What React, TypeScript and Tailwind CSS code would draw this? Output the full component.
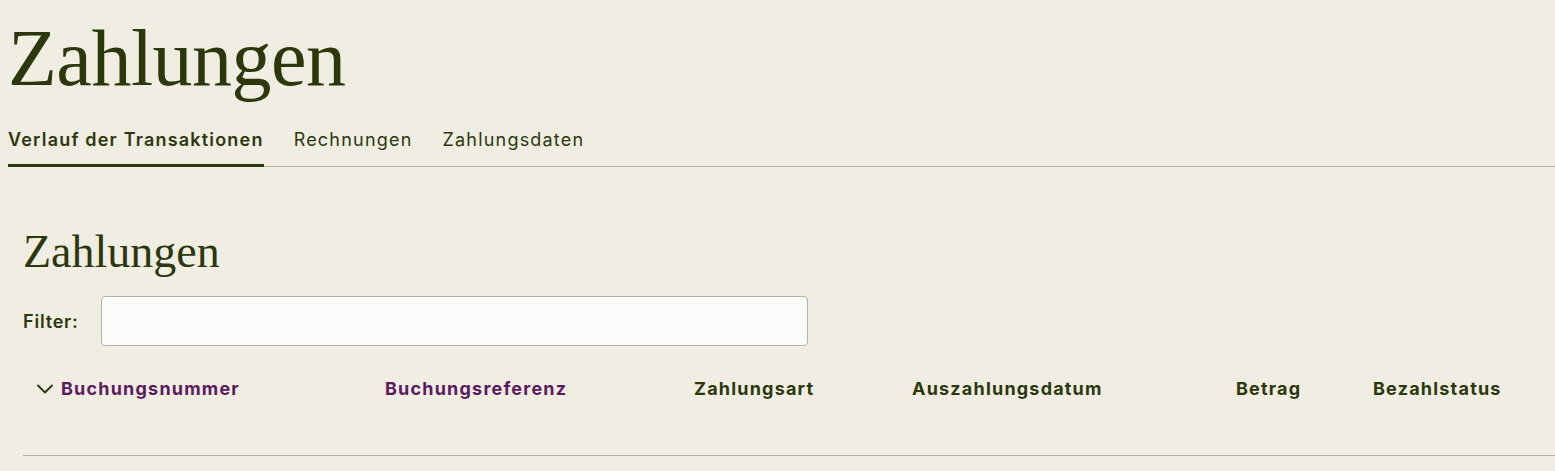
import { ChevronDown } from "lucide-react";

const tabs = ["Verlauf der Transaktionen", "Rechnungen", "Zahlungsdaten"];

const columns = [
  { label: "Buchungsnummer", sortable: true, active: true },
  { label: "Buchungsreferenz", sortable: true },
  { label: "Zahlungsart" },
  { label: "Auszahlungsdatum" },
  { label: "Betrag" },
  { label: "Bezahlstatus" },
];

export default function App() {
  return (
    <div
      className="min-h-[471px] bg-[#f0ede3] text-[#2c380c] overflow-hidden"
      style={{ fontFamily: "Inter, 'Noto Sans', sans-serif" }}
    >
      <div className="pl-2">
        <h1
          className="text-[80px] leading-none pt-[18px] tracking-[-0.5px]"
          style={{ fontFamily: "'Liberation Serif', 'DejaVu Serif', serif" }}
        >
          Zahlungen
        </h1>

        <div className="mt-[30px] flex gap-[30px] border-b border-[#b3b0a5]">
          {tabs.map((t, i) => (
            <button
              key={t}
              className={`pb-[12px] -mb-px text-[18px] leading-[24px] tracking-[1.2px] ${
                i === 0
                  ? "font-semibold border-b-[3px] border-[#2c380c]"
                  : "border-b-[3px] border-transparent"
              }`}
            >
              {t}
            </button>
          ))}
        </div>
      </div>

      <div className="pl-[23px] pt-[62px]">
        <h2
          className="text-[46px] leading-none"
          style={{ fontFamily: "'Liberation Serif', 'DejaVu Serif', serif" }}
        >
          Zahlungen
        </h2>

        <div className="mt-[21px] flex items-center">
          <label className="w-[78px] text-[18px] font-semibold tracking-[0.8px]">Filter:</label>
          <input className="w-[707px] h-[50px] rounded-[4px] border border-[#b5b2a8] bg-[#fbfbf9] px-3 outline-none" />
        </div>

        <div className="grid grid-cols-[362px_309px_218px_324px_137px_1fr] h-[110px] items-start pt-[31px] border-b border-[#b3b0a5] text-[18px] leading-[24px] font-bold tracking-[1.2px]">
          {columns.map((c, i) => (
            <div
              key={c.label}
              className={`flex items-center ${i === 0 ? "pl-[8px]" : ""} ${
                c.sortable ? "text-[#5c1a5e]" : ""
              }`}
            >
              {c.active && (
                <ChevronDown className="mr-[2px] h-[28px] w-[28px] -my-[2px] text-[#2c380c]" strokeWidth={1.6} />
              )}
              {c.label}
            </div>
          ))}
        </div>
      </div>
    </div>
  );
}
